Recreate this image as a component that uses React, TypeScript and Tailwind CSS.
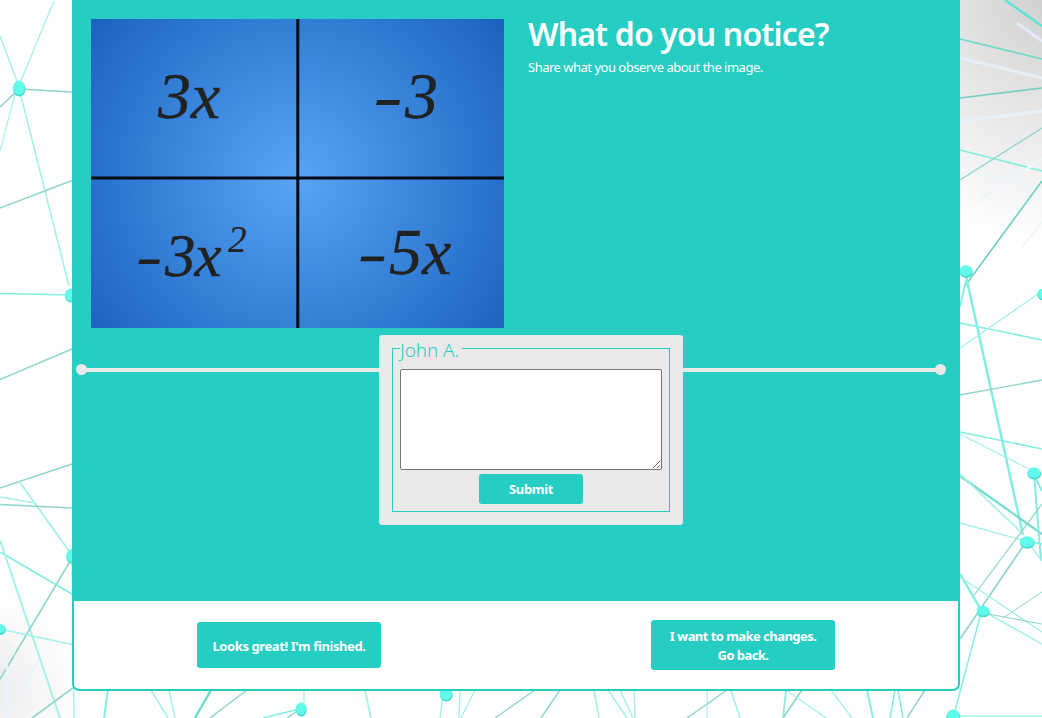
import React from "react";

type Segment = [number, number, number, number, string, number];

const PALE = "#a6f1e7";
const DARK = "#8fd5ca";
const AQUA = "#84ede2";
const ICE = "#e6f6fb";

const segments: Segment[] = [
  // left side
  [54, 1, 20, 83, PALE, 1.3],
  [0, 36, 17, 81, PALE, 1.5],
  [19, 89, 72, 92, DARK, 1.6],
  [18, 90, 0, 107, DARK, 1.6],
  [16, 90, 0, 151, PALE, 1.2],
  [20, 92, 69, 286, PALE, 1.6],
  [0, 208, 72, 180.5, DARK, 1.4],
  [0, 293.5, 70, 295, AQUA, 1.4],
  [0, 379.5, 72, 349, DARK, 1.4],
  [0, 488, 72, 464, DARK, 1.5],
  [19, 481, 69, 551, PALE, 1.8],
  [0, 497, 35, 503, PALE, 1.3],
  [0, 504.5, 72, 508, DARK, 1.6],
  [0, 552, 72, 594, AQUA, 1.8],
  [0, 540, 60, 718, PALE, 2],
  [72, 558, 0, 679, DARK, 1.6],
  [0, 629, 72, 644.5, PALE, 1.4],
  [72, 560, 74, 718, PALE, 1.4],
  [32, 718, 73, 688, DARK, 1.6],
  [0, 632, 14, 655, ICE, 2],
  [7, 655, 7, 718, ICE, 2],
  [38, 662, 5, 718, ICE, 2],
  // bottom strip
  [108, 690, 104, 718, AQUA, 2],
  [151, 690, 168, 718, PALE, 1.6],
  [169, 690, 175, 718, PALE, 1.6],
  [211, 690, 195, 718, "#65dccc", 2.4],
  [247, 690, 210, 718, DARK, 1.5],
  [300, 709, 263, 718, AQUA, 1.4],
  [304, 690, 304, 704, PALE, 1.3],
  [300, 709, 287, 718, DARK, 1.4],
  [365, 690, 371, 718, PALE, 1.8],
  [443, 695, 440, 718, PALE, 1.4],
  [460, 690, 459, 718, PALE, 1.4],
  [475, 690, 461, 718, PALE, 1.4],
  [495, 718, 535, 690, DARK, 1.3],
  [560, 690, 541, 718, DARK, 1.4],
  [594, 690, 599, 718, PALE, 1.6],
  [608, 690, 627, 718, PALE, 1.6],
  [620, 690, 633, 718, PALE, 1.6],
  [634, 690, 635, 718, PALE, 1.5],
  [687, 718, 727, 690, DARK, 1.5],
  [707, 690, 707, 718, PALE, 1.2],
  [731, 690, 740, 718, PALE, 1.6],
  [786, 690, 783, 718, AQUA, 1.7],
  [802, 690, 783, 718, DARK, 1.7],
  [786, 690, 826, 718, PALE, 1.4],
  [831, 690, 852, 718, PALE, 1.3],
  [867, 690, 873, 718, AQUA, 2],
  [895, 690, 890, 718, AQUA, 1.5],
  [898, 690, 903, 718, AQUA, 1.5],
  [925, 690, 907, 718, DARK, 1.5],
  // right side
  [1005, 0, 1042, 26, "#5be3d6", 2.4],
  [1017, 23, 1042, 41, "#e2ebf8", 3],
  [960, 39, 1042, 59, "#6bd9cc", 1.7],
  [960, 58, 1042, 78, "#e7eef8", 3],
  [960, 98, 1042, 88, "#74cfc1", 1.7],
  [960, 121, 1042, 111, "#e9f2fb", 3],
  [960, 150, 1042, 171, AQUA, 1.8],
  [960, 180, 1042, 128, DARK, 1.3],
  [978, 201, 1042, 159, "#edf7fa", 2.5],
  [980, 173, 1042, 190, "#edf7fa", 2.5],
  [1022, 247, 1042, 222, "#edf7fa", 2],
  [965, 286, 1042, 181, "#6dcdbf", 1.6],
  [966, 276, 1023, 535, AQUA, 2.5],
  [966, 280, 960, 307, AQUA, 1.8],
  [960, 323, 1042, 340, AQUA, 1.6],
  [960, 348, 1038, 294, PALE, 1.3],
  [960, 395, 1042, 380, DARK, 1.3],
  [960, 432, 1042, 449, AQUA, 1.5],
  [960, 434, 1033, 471, PALE, 1.3],
  [960, 476, 1042, 534, "#72dbcf", 2.2],
  [960, 474, 1022, 533, PALE, 1.7],
  [960, 523, 1026, 541, PALE, 1.3],
  [1034, 474, 1041, 560, AQUA, 2],
  [1035, 477, 1042, 491, AQUA, 2],
  [972, 598, 1042, 504, DARK, 1.2],
  [1026, 542, 960, 639, DARK, 1.7],
  [1027, 541, 1042, 561, PALE, 1.5],
  [1027, 541, 1042, 544, AQUA, 1.4],
  [960, 574, 981, 610, AQUA, 2.4],
  [960, 577, 1042, 632, PALE, 1.4],
  [983, 611, 1042, 644, PALE, 1.5],
  [983, 613, 1042, 624, DARK, 1.1],
  [1003, 618, 1042, 592, DARK, 1],
  [981, 613, 955, 711, AQUA, 1.4],
  [955, 716, 1042, 716, PALE, 1.3],
];

const nodes: [number, number, number, number][] = [
  [19, 88, 6.3, 7.5],
  [71, 295, 6.5, 6.5],
  [72, 556, 6, 7],
  [0, 629, 5.5, 5],
  [301, 709, 5.5, 6.5],
  [446, 694, 6.5, 6.5],
  [966, 271, 6.5, 6],
  [1043, 294, 6, 5.5],
  [1034, 473, 7, 5.5],
  [1027, 542, 7.5, 5.8],
  [983, 611, 6.5, 5.3],
  [953, 716, 7, 6.5],
];

function NetworkBackdrop() {
  return (
    <svg className="absolute inset-0 h-full w-full" viewBox="0 0 1042 718" aria-hidden="true">
      <defs>
        <radialGradient id="cornerShade" gradientUnits="userSpaceOnUse" cx="1052" cy="0" r="245">
          <stop offset="0" stopColor="#cfcfcf" />
          <stop offset="0.45" stopColor="#e6e6e6" />
          <stop offset="1" stopColor="#ffffff" />
        </radialGradient>
        <radialGradient id="lowShade" gradientUnits="userSpaceOnUse" cx="-10" cy="690" r="95">
          <stop offset="0" stopColor="#ececec" />
          <stop offset="1" stopColor="#ffffff" />
        </radialGradient>
      </defs>
      <rect width="1042" height="718" fill="#ffffff" />
      <rect x="780" width="262" height="260" fill="url(#cornerShade)" />
      <rect y="580" width="100" height="138" fill="url(#lowShade)" />
      {segments.map(([x1, y1, x2, y2, color, width], i) => (
        <line key={i} x1={x1} y1={y1} x2={x2} y2={y2} stroke={color} strokeWidth={width} />
      ))}
      {nodes.map(([cx, cy, rx, ry], i) => (
        <g key={i}>
          <ellipse cx={cx + 0.3} cy={cy + 0.9} rx={rx} ry={ry} fill="#41dccf" />
          <ellipse cx={cx} cy={cy - 0.3} rx={rx - 0.3} ry={ry - 0.4} fill="#62faeb" />
        </g>
      ))}
    </svg>
  );
}

function ExpressionBoard() {
  return (
    <svg className="block h-[309px] w-[413px] shrink-0" viewBox="0 0 413 309" role="img">
      <defs>
        <radialGradient id="board" gradientUnits="userSpaceOnUse" cx="206" cy="159" r="256">
          <stop offset="0" stopColor="#57a5f7" />
          <stop offset="1" stopColor="#1c63bf" />
        </radialGradient>
      </defs>
      <rect width="413" height="309" fill="url(#board)" />
      <path d="M206.8 0V309M0 159H413" stroke="#030b16" strokeWidth="3" />
      <g fill="#202322" stroke="#202322" strokeWidth="0.4" fontFamily="Liberation Serif, serif" fontStyle="italic">
        <text x="67" y="98.500" fontSize="66">3</text>
        <text x="100" y="98.500" fontSize="66">x</text>
        <text x="314" y="98.500" fontSize="66">3</text>
        <text x="74" y="256.500" fontSize="61">3</text>
        <text x="103.500" y="256.500" fontSize="61">x</text>
        <text x="137" y="232.500" fontSize="37" strokeWidth="0.2">2</text>
        <text x="298" y="255" fontSize="66">5</text>
        <text x="331" y="255" fontSize="66">x</text>
      </g>
      <g fill="#202322">
        <path d="M286.300 81H309l-1 5H285z" />
        <path d="M48.500 240.500H69l-1 4.500H47.300z" />
        <path d="M270.500 237.500H293.500l-1 4.800H269.300z" />
      </g>
    </svg>
  );
}

export default function App() {
  return (
    <div className="relative h-[718px] w-[1042px] overflow-hidden bg-white font-['Noto_Sans',sans-serif]">
      <NetworkBackdrop />
      <main className="relative ml-[72px] flex h-[691px] w-[888px] flex-col overflow-hidden rounded-b-[7px] border-2 border-t-0 border-[#26cdc2] bg-white">
        <section className="h-[601px] shrink-0 bg-[#26cdc2] pt-[19px]">
          <div className="flex gap-6 pl-[17px]">
            <ExpressionBoard />
            <div className="text-white">
              <h1 className="-mt-[5px] text-[32px] leading-10 font-semibold whitespace-nowrap tracking-[-0.85px]">
                What do you notice?
              </h1>
              <p className="mt-[3px] text-[13px] leading-5 whitespace-nowrap tracking-[-0.5px]">
                Share what you observe about the image.
              </p>
            </div>
          </div>
          <div className="relative mt-[7px]">
            <div className="absolute top-[29px] left-[2px] flex w-[870px] items-center">
              <span className="size-[11px] rounded-full bg-[#e9e9e9]" />
              <span className="-mx-px h-1 flex-1 bg-[#e9e9e9]" />
              <span className="size-[11px] rounded-full bg-[#e9e9e9]" />
            </div>
            <form className="relative ml-[305px] h-[190px] w-[304px] rounded-[3px] bg-[#e9e9e9] px-[13px] pt-[3px]">
              <fieldset className="h-[174px] w-[278px] border border-[#26cdc2] px-[7px]">
                <legend className="h-[21px] w-[62px] text-[19px] leading-[25px] font-[350] whitespace-nowrap text-[#26cdc2] tracking-[-0.1px]">
                  John A.
                </legend>
                <textarea
                  aria-label="Response"
                  className="mt-[10px] block h-[101px] w-[262px] rounded-[2px] border border-[#767676] bg-white"
                />
                <button
                  type="button"
                  className="mx-auto mt-1 block h-[30px] w-[104px] rounded-[3px] bg-[#26cdc2] pt-[2px] text-[13px] font-bold text-white tracking-[-0.35px]"
                >
                  Submit
                </button>
              </fieldset>
            </form>
          </div>
        </section>
        <footer className="flex flex-1 items-center">
          <button
            type="button"
            className="ml-[123px] h-[46px] w-[184px] rounded-[3px] bg-[#26cdc2] pt-[3px] text-[13px] font-bold whitespace-nowrap text-white tracking-[-0.4px]"
          >
            Looks great! I'm finished.
          </button>
          <button
            type="button"
            className="ml-[270px] h-[50px] w-[184px] rounded-[3px] bg-[#26cdc2] pt-[2px] text-[13px] leading-[19px] font-bold text-white tracking-[-0.55px]"
          >
            I want to make changes.
            <br />
            Go back.
          </button>
        </footer>
      </main>
    </div>
  );
}
